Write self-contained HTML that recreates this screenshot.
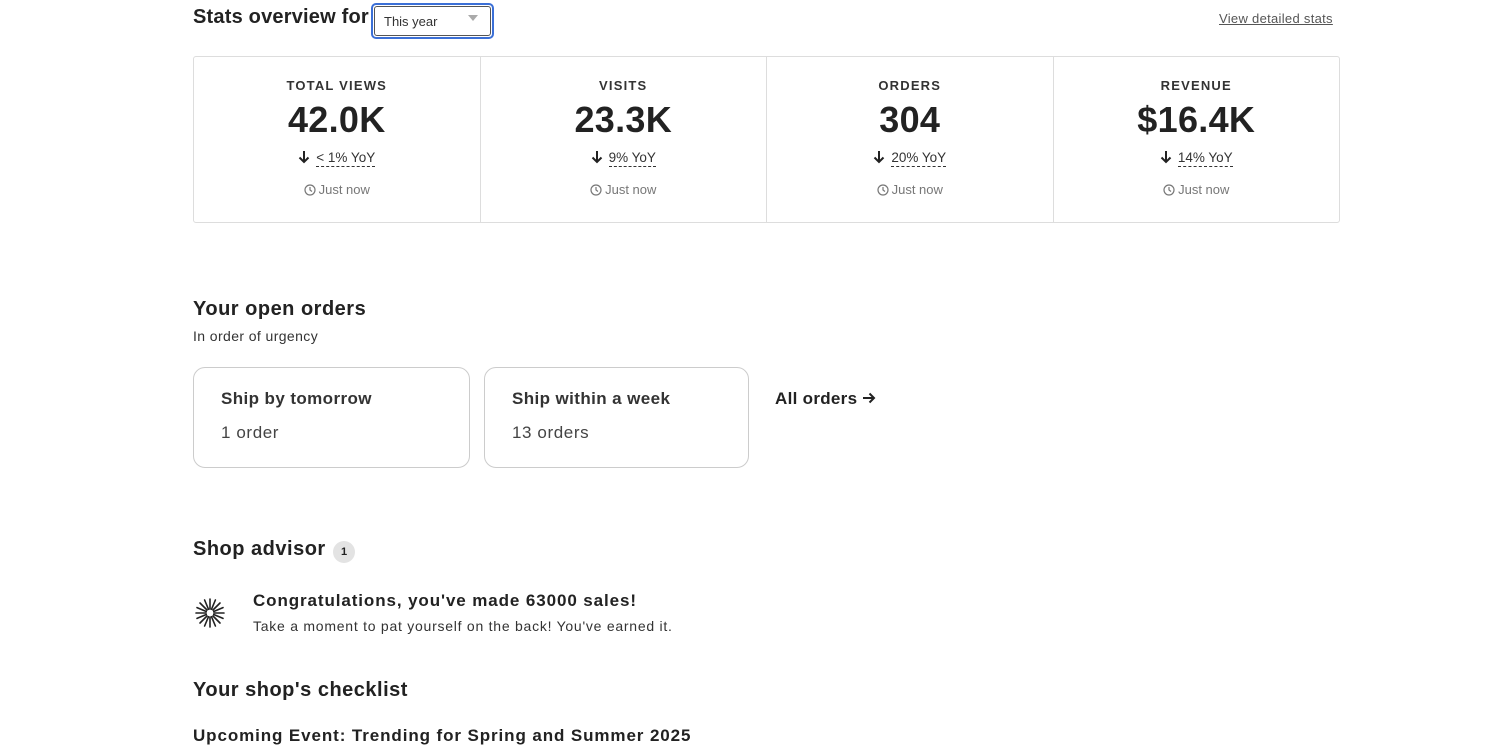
<!DOCTYPE html>
<html><head><style>
*{margin:0;padding:0;box-sizing:border-box}
body{width:1500px;height:735px;overflow:hidden;background:#fff;font-family:"Liberation Sans",sans-serif;color:#222;position:relative}
.a{position:absolute;white-space:nowrap}
.stats{position:absolute;left:193px;top:56px;width:1147px;height:167px;border:1px solid #ddd;border-radius:3px;display:flex}
.col{flex:1;border-right:1px solid #ddd;text-align:center;position:relative}
.col:last-child{border-right:none}
.lbl{position:absolute;top:21px;left:0;right:0;font-size:13px;letter-spacing:1.2px;font-weight:bold;color:#333}
.num{position:absolute;top:42px;left:0;right:0;font-size:36px;color:#222;font-weight:bold;letter-spacing:0.3px}
.yoy{position:absolute;top:93px;left:0;right:0;font-size:13.5px;color:#333}
.yoy span{border-bottom:1px dashed #333;padding-bottom:1px;margin-left:6px}
.yoy svg{vertical-align:-2px}
.jn{position:absolute;top:125px;left:0;right:0;font-size:13px;color:#777}
.jn svg{vertical-align:-2px;margin-right:3px}
.card{position:absolute;top:367px;height:101px;border:1px solid #ccc;border-radius:12px}
.card .t{position:absolute;left:27px;top:21px;font-size:17px;font-weight:bold;color:#333;letter-spacing:0.4px}
.card .s{position:absolute;left:27px;top:55px;font-size:17px;color:#444;letter-spacing:0.6px}
h2{position:absolute;white-space:nowrap;font-size:20px;font-weight:bold;letter-spacing:0.5px;color:#222}
</style></head><body>
<h2 style="left:193px;top:6px;letter-spacing:0.2px">Stats overview for</h2>
<div class="a" style="left:371px;top:3px;width:123px;height:36px;border:2px solid #3b6fd6;border-radius:5px"><div style="position:absolute;left:1px;top:1px;right:1px;bottom:1px;border:1px solid #555;border-radius:3px"></div><span class="a" style="left:11px;top:9px;font-size:13px;color:#333">This year</span><span class="a" style="left:95px;top:10px;width:0;height:0;border-left:5px solid transparent;border-right:5px solid transparent;border-top:6px solid #aaa"></span></div>
<div class="a" style="left:1219px;top:11px;font-size:13px;color:#555;text-decoration:underline;letter-spacing:0.3px">View detailed stats</div>
<div class="stats">
<div class="col"><div class="lbl">TOTAL VIEWS</div><div class="num">42.0K</div><div class="yoy"><svg width="12" height="14" viewBox="0 0 12 14" fill="none" stroke="#222" stroke-width="2"><path d="M6 1v11M1.5 7.5L6 12l4.5-4.5"/></svg><span>&lt; 1% YoY</span></div><div class="jn"><svg width="12" height="12" viewBox="0 0 12 12" fill="none" stroke="#777" stroke-width="1.2"><circle cx="6" cy="6" r="5"/><path d="M6 3v3l2 1.5"/></svg>Just now</div></div>
<div class="col"><div class="lbl">VISITS</div><div class="num">23.3K</div><div class="yoy"><svg width="12" height="14" viewBox="0 0 12 14" fill="none" stroke="#222" stroke-width="2"><path d="M6 1v11M1.5 7.5L6 12l4.5-4.5"/></svg><span>9% YoY</span></div><div class="jn"><svg width="12" height="12" viewBox="0 0 12 12" fill="none" stroke="#777" stroke-width="1.2"><circle cx="6" cy="6" r="5"/><path d="M6 3v3l2 1.5"/></svg>Just now</div></div>
<div class="col"><div class="lbl">ORDERS</div><div class="num">304</div><div class="yoy"><svg width="12" height="14" viewBox="0 0 12 14" fill="none" stroke="#222" stroke-width="2"><path d="M6 1v11M1.5 7.5L6 12l4.5-4.5"/></svg><span>20% YoY</span></div><div class="jn"><svg width="12" height="12" viewBox="0 0 12 12" fill="none" stroke="#777" stroke-width="1.2"><circle cx="6" cy="6" r="5"/><path d="M6 3v3l2 1.5"/></svg>Just now</div></div>
<div class="col"><div class="lbl">REVENUE</div><div class="num">$16.4K</div><div class="yoy"><svg width="12" height="14" viewBox="0 0 12 14" fill="none" stroke="#222" stroke-width="2"><path d="M6 1v11M1.5 7.5L6 12l4.5-4.5"/></svg><span>14% YoY</span></div><div class="jn"><svg width="12" height="12" viewBox="0 0 12 12" fill="none" stroke="#777" stroke-width="1.2"><circle cx="6" cy="6" r="5"/><path d="M6 3v3l2 1.5"/></svg>Just now</div></div>
</div>
<h2 style="left:193px;top:298px">Your open orders</h2>
<div class="a" style="left:193px;top:328px;font-size:14px;color:#333;letter-spacing:0.4px">In order of urgency</div>
<div class="card" style="left:193px;width:277px"><div class="t">Ship by tomorrow</div><div class="s">1 order</div></div>
<div class="card" style="left:484px;width:265px"><div class="t">Ship within a week</div><div class="s">13 orders</div></div>
<div class="a" style="left:775px;top:389px;font-size:17px;font-weight:bold;color:#222;letter-spacing:0.3px">All orders <svg width="14" height="12" viewBox="0 0 14 12" fill="none" stroke="#222" stroke-width="2" style="vertical-align:0"><path d="M1 6h11M7.5 1.5L12 6l-4.5 4.5"/></svg></div>
<h2 style="left:193px;top:538px">Shop advisor</h2>
<div class="a" style="left:333px;top:541px;width:22px;height:22px;border-radius:11px;background:#e3e3e3;font-size:11px;font-weight:bold;text-align:center;line-height:22px">1</div>
<svg class="a" style="left:194px;top:597px" width="32" height="32" viewBox="-16 -16 32 32" stroke="#222" stroke-width="1.6" stroke-linecap="round">
<path d="M0-14V-4M0 14V4M-14 0H-4M14 0H4M-10-10L-3-3M10 10L3 3M10-10L3-3M-10 10L-3 3M-5.4-13L-1.5-3.7M5.4 13L1.5 3.7M13-5.4L3.7-1.5M-13 5.4L-3.7 1.5M5.4-13L1.5-3.7M-5.4 13L-1.5 3.7M-13-5.4L-3.7-1.5M13 5.4L3.7 1.5"/></svg>
<div class="a" style="left:253px;top:591px;font-size:17px;font-weight:bold;color:#222;letter-spacing:0.9px">Congratulations, you've made 63000 sales!</div>
<div class="a" style="left:253px;top:618px;font-size:14px;color:#333;letter-spacing:0.75px">Take a moment to pat yourself on the back! You've earned it.</div>
<h2 style="left:193px;top:679px">Your shop's checklist</h2>
<div class="a" style="left:193px;top:726px;font-size:17px;font-weight:bold;letter-spacing:0.9px">Upcoming Event: Trending for Spring and Summer 2025</div>
</body></html>
